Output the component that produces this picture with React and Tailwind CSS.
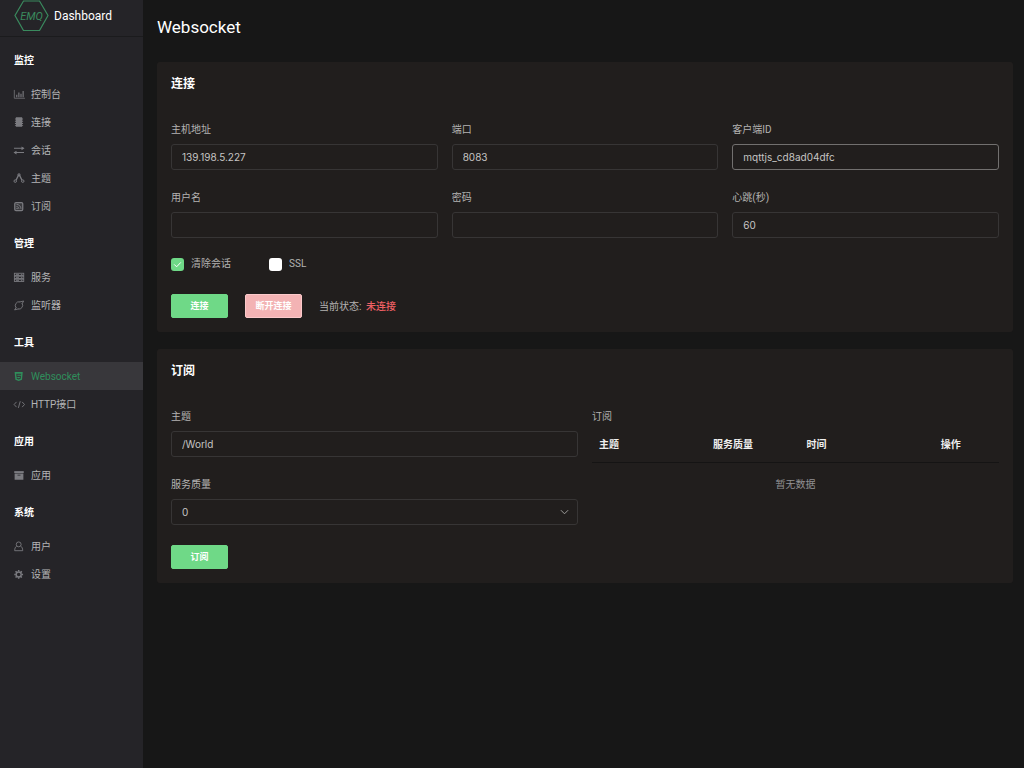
import React from "react";

/* ---------- icons ---------- */

const Icon = ({ children, filled }) => (
  <svg
    viewBox="0 0 16 16"
    aria-hidden="true"
    className="w-full h-full overflow-visible"
    fill={filled ? "currentColor" : "none"}
    stroke={filled ? "none" : "currentColor"}
    strokeWidth="1.4"
  >
    {children}
  </svg>
);

const ChartIcon = () => (
  <Icon>
    <path d="M0.500 1.500V14.800H17.500" strokeWidth="1.200" />
    <path d="M4.400 13V9M7.800 13V5.500M11.200 13V7.500M14.600 13V3" strokeWidth="1.800" />
  </Icon>
);

const ConnectionIcon = () => (
  <Icon filled>
    <path d="M3 .5h10v2h1.500v1.500H13v2h1.500v1.500H13v2h1.500V11H13v2h1.500v1.500H13v1H3v-1H1.500V13H3v-2H1.500V9.500H3v-2H1.500V6H3V4H1.500V2.500H3z" />
  </Icon>
);

const SessionIcon = () => (
  <Icon>
    <path d="M0 5.200h15M1 12h15" strokeWidth="1.600" />
    <path d="M12 2.200l4.800 3L12 8.200zM4 9l-4.800 3L4 15z" fill="currentColor" stroke="none" />
  </Icon>
);

const TopicIcon = () => (
  <Icon>
    <path d="M7 4L3.400 11.200M9 4l3.600 7.200" strokeWidth="2.200" />
    <circle cx="8" cy="2.800" r="1.600" strokeWidth="1.800" />
    <circle cx="2" cy="13" r="2" strokeWidth="1.600" />
    <circle cx="14" cy="13" r="2" strokeWidth="1.600" />
  </Icon>
);

const SubscribeIcon = () => (
  <Icon>
    <rect x="1.200" y="2.400" width="12.800" height="12.800" rx="2" strokeWidth="2" fill="currentColor" fillOpacity="0.250" />
    <path d="M4 5.400c4 0 7.200 3.200 7.200 7.200M4 8.800c2.200 0 3.800 1.600 3.800 3.800" strokeWidth="1.500" />
    <circle cx="4.900" cy="11.800" r="1.200" fill="currentColor" stroke="none" />
  </Icon>
);

const ServiceIcon = () => (
  <Icon>
    <rect x="0.600" y="2" width="15" height="3.600" />
    <rect x="0.600" y="6.800" width="15" height="3.600" />
    <rect x="0.600" y="11.600" width="15" height="3.600" />
    <path d="M3 3.800h5M11 3.800h2.500M3 8.600h5M11 8.600h2.500M3 13.400h5M11 13.400h2.500" />
  </Icon>
);

const ListenerIcon = () => (
  <Icon>
    <path d="M3.400 12.600A6 6 0 0 1 9.500 3M12.800 5.200A6 6 0 0 1 6.400 14.400" />
    <path d="M9 3.200L15.400 1.600 13 6M7 14.200L1 15.800l2.600-3.800" />
  </Icon>
);

const Html5Icon = () => (
  <Icon filled>
    <path
      fillRule="evenodd"
      d="M1 1.400h13L12.800 14 7.500 16 2.200 14zM3.600 4.200l.5 5.200h5.300l-.2 1.800-1.700.5-1.600-.5-.1-.9H4.200l.2 2.100 3.100 1 3.100-1 .5-4.900H5.500l-.2-1.500h6l.2-1.800z"
    />
  </Icon>
);

const CodeIcon = () => (
  <Icon>
    <path d="M4 4.600L.2 8.800 4 13M13 4.600l3.800 4.200L13 13M10 3.600L7 14.200" />
  </Icon>
);

const AppIcon = () => (
  <Icon filled>
    <path d="M.4 1.800h15.200v3H.4z" />
    <path fillRule="evenodd" d="M1 5.600h14v9.800H1zM5.600 7.600v1.200h4.800V7.600z" />
  </Icon>
);

const UserIcon = () => (
  <Icon>
    <circle cx="7.500" cy="5.400" r="3.900" />
    <path d="M4.500 8C2.100 9.400 1.100 12 1.100 15.500h12.800c0-3.500-1-6.100-3.400-7.500" />
  </Icon>
);

const GearIcon = () => (
  <Icon>
    <circle cx="7.500" cy="8.700" r="4" strokeWidth="2.200" />
    <path
      d="M7.500 1.700v2.400M7.500 13.300v2.400M.5 8.700h2.400M12.100 8.700h2.400M2.500 3.700l1.700 1.700M10.800 12l1.700 1.700M12.500 3.700l-1.700 1.700M4.200 12l-1.700 1.700"
      strokeWidth="2.400"
    />
  </Icon>
);

const Logo = () => (
  <svg viewBox="0 0 35 31" aria-hidden="true" className="w-[35px] h-[31px] text-[#3a8a5e]">
    <path
      d="M9.500 1h16L34 15.500l-8.500 15h-16L1 15.500z"
      fill="none"
      stroke="currentColor"
      strokeWidth="1.200"
    />
    <text
      x="17.500"
      y="19.500"
      textAnchor="middle"
      fontSize="11"
      fontStyle="italic"
      fill="currentColor"
    >
      EMQ
    </text>
  </svg>
);

/* ---------- sidebar ---------- */

const menu = [
  {
    title: "监控",
    items: [
      { label: "控制台", icon: <ChartIcon /> },
      { label: "连接", icon: <ConnectionIcon /> },
      { label: "会话", icon: <SessionIcon /> },
      { label: "主题", icon: <TopicIcon /> },
      { label: "订阅", icon: <SubscribeIcon /> },
    ],
  },
  {
    title: "管理",
    items: [
      { label: "服务", icon: <ServiceIcon /> },
      { label: "监听器", icon: <ListenerIcon /> },
    ],
  },
  {
    title: "工具",
    items: [
      { label: "Websocket", icon: <Html5Icon />, active: true },
      { label: "HTTP接口", icon: <CodeIcon /> },
    ],
  },
  {
    title: "应用",
    items: [{ label: "应用", icon: <AppIcon /> }],
  },
  {
    title: "系统",
    items: [
      { label: "用户", icon: <UserIcon /> },
      { label: "设置", icon: <GearIcon /> },
    ],
  },
];

const Sidebar = () => (
  <aside className="w-[143px] shrink-0 bg-[#252428]">
    <div className="h-[37px] pl-3.5 pb-[5px] flex items-center gap-[5px] border-b border-[#1b1b1d]">
      <Logo />
      <span className="text-[12px] text-white">Dashboard</span>
    </div>
    <nav>
      {menu.map((group) => (
        <section key={group.title}>
          <h2 className="h-[43px] pt-[3px] pl-3.5 flex items-center text-[10px] font-bold text-white">
            {group.title}
          </h2>
          <ul>
            {group.items.map((item) => (
              <li key={item.label}>
                <a
                  href="#"
                  className={`h-7 pl-3.5 flex items-center gap-1.5 text-[10px] ${
                    item.active ? "bg-[#38373b] text-[#2f8f5b]" : "text-[#b4b4b6]"
                  }`}
                >
                  <span
                    className={`w-[11px] h-[10px] flex ${
                      item.active ? "text-[#2f8f5b]" : "text-[#7b7b80]"
                    }`}
                  >
                    <span className="w-[10px] h-[10px]">{item.icon}</span>
                  </span>
                  {item.label}
                </a>
              </li>
            ))}
          </ul>
        </section>
      ))}
    </nav>
  </aside>
);

/* ---------- form pieces ---------- */

const Card = ({ title, children }) => (
  <section className="rounded-[3px] bg-[#211e1d] p-3.5">
    <h2 className="mb-[29px] text-[12px] leading-4 font-bold text-white">{title}</h2>
    {children}
  </section>
);

const Field = ({ id, label, children }) => (
  <div>
    <label htmlFor={id} className="block mb-[5px] text-[10px] leading-[18px] text-[#b4b3b2]">
      {label}
    </label>
    {children}
  </div>
);

const TextField = ({ id, label, value, type = "text", focused }) => (
  <Field id={id} label={label}>
    <input
      id={id}
      type={type}
      defaultValue={value}
      className={`block w-full h-[26px] px-2.5 rounded-[3px] border bg-transparent font-['Inter','Noto_Sans_CJK_SC',sans-serif] text-[10px] text-[#c6c5c4] outline-none ${
        focused ? "border-[#72706f]" : "border-[#373535]"
      }`}
    />
  </Field>
);

const Checkbox = ({ label, checked }) => (
  <label className="flex items-center gap-[7px] text-[10px] leading-[18px] text-[#b4b3b2]">
    <span className="relative flex">
      <input
        type="checkbox"
        defaultChecked={checked}
        className="peer appearance-none w-[13px] h-[13px] rounded-[3px] bg-white checked:bg-[#6fd987]"
      />
      <svg
        viewBox="0 0 13 13"
        aria-hidden="true"
        className="absolute inset-0 hidden peer-checked:block pointer-events-none"
      >
        <path d="M3.200 6.400l2.400 2.400 4.200-4.400" fill="none" stroke="#fff" strokeWidth="1" />
      </svg>
    </span>
    {label}
  </label>
);

const Button = ({ children, danger }) => (
  <button
    type="button"
    className={`w-[57px] h-6 pt-0.5 rounded-[2px] border text-[9px] font-bold text-white ${
      danger ? "bg-[#f3b3b4] border-[#fbc9ca]" : "bg-[#6fd987] border-[#6fd987]"
    }`}
  >
    {children}
  </button>
);

/* ---------- panels ---------- */

const ConnectPanel = () => (
  <Card title="连接">
    <div className="grid grid-cols-3 gap-x-3.5 gap-y-[19px]">
      <TextField id="host" label="主机地址" value="139.198.5.227" />
      <TextField id="port" label="端口" value="8083" />
      <TextField id="client-id" label="客户端ID" value="mqttjs_cd8ad04dfc" focused />
      <TextField id="username" label="用户名" value="" />
      <TextField id="password" label="密码" type="password" value="" />
      <TextField id="keepalive" label="心跳(秒)" value="60" />
    </div>
    <div className="mt-[17px] flex gap-[38px]">
      <Checkbox label="清除会话" checked />
      <Checkbox label="SSL" />
    </div>
    <div className="mt-[21px] flex items-center gap-[17px]">
      <Button>连接</Button>
      <Button danger>断开连接</Button>
      <p className="text-[10px] text-[#b4b3b2]">
        当前状态: <span className="ml-0.5 font-medium text-[#ee6064]">未连接</span>
      </p>
    </div>
  </Card>
);

const SubscribePanel = () => (
  <Card title="订阅">
    <div className="grid grid-cols-2 gap-x-3.5">
      <div>
        <div className="grid gap-y-[19px]">
          <TextField id="topic" label="主题" value="/World" />
          <Field id="qos" label="服务质量">
            <div className="relative">
              <select
                id="qos"
                defaultValue="0"
                className="block appearance-none w-full h-[26px] px-2.5 rounded-[3px] border border-[#373535] bg-[#211e1d] font-['Inter','Noto_Sans_CJK_SC',sans-serif] text-[10px] text-[#c6c5c4] outline-none"
              >
                <option>0</option>
                <option>1</option>
                <option>2</option>
              </select>
              <svg
                viewBox="0 0 10 6"
                aria-hidden="true"
                className="absolute right-[9px] top-[10px] w-[9px] h-[6px] text-[#a09f9e] pointer-events-none"
              >
                <path d="M1 1l4 4 4-4" fill="none" stroke="currentColor" strokeWidth="1.100" />
              </svg>
            </div>
          </Field>
        </div>
        <div className="mt-5 flex">
          <Button>订阅</Button>
        </div>
      </div>
      <table className="w-full table-fixed self-start text-left text-[10px]">
        <caption className="text-left leading-[18px] text-[#b4b3b2]">订阅</caption>
        <thead>
          <tr className="h-9 border-b border-[#151414] text-[#efeeee]">
            <th className="w-[28%] pl-[7px] pt-0.5">主题</th>
            <th className="w-[23%] pl-[7px] pt-0.5">服务质量</th>
            <th className="w-[33%] pl-[7px] pt-0.5">时间</th>
            <th className="pl-[7px] pt-0.5">操作</th>
          </tr>
        </thead>
        <tbody>
          <tr className="h-11 text-center text-[#929194]">
            <td colSpan={4}>暂无数据</td>
          </tr>
        </tbody>
      </table>
    </div>
  </Card>
);

const App = () => (
  <div className="min-h-screen flex bg-[#171717] font-['Roboto','Noto_Sans_CJK_SC',sans-serif]">
    <Sidebar />
    <main className="flex-1 min-w-0 pl-3.5 pr-[11px] pb-3.5">
      <h1 className="h-[62px] pb-[7px] flex items-center text-[17px] text-white">Websocket</h1>
      <div className="flex flex-col gap-[17px]">
        <ConnectPanel />
        <SubscribePanel />
      </div>
    </main>
  </div>
);

export default App;
